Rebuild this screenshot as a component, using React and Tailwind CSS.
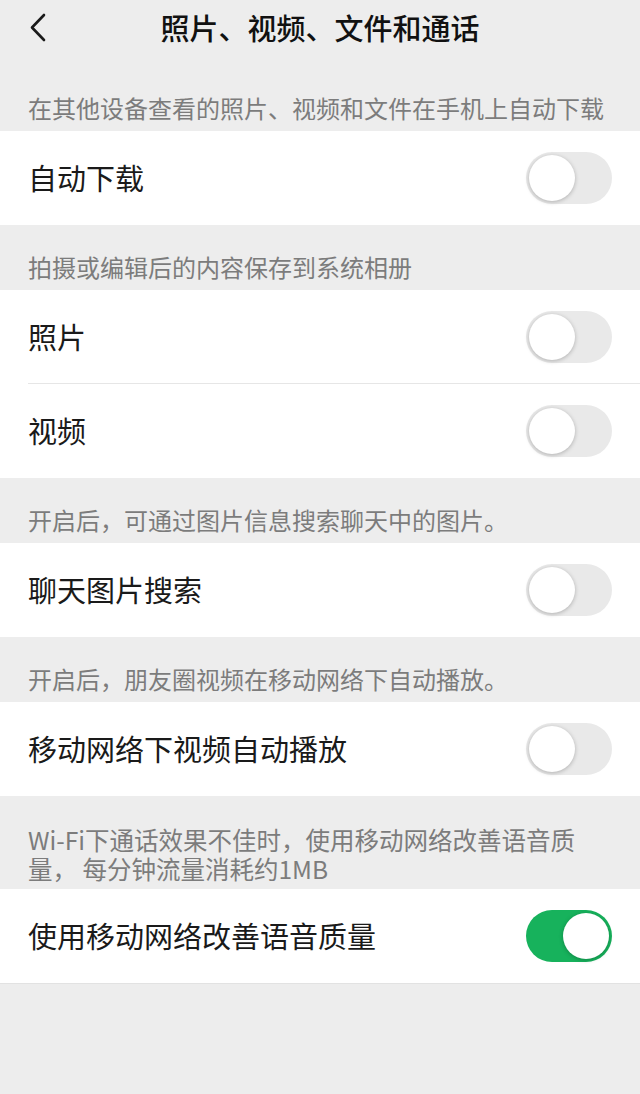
const sections = [
    { label: '在其他设备查看的照片、视频和文件在手机上自动下载', first: true, rows: [{ name: '自动下载', on: false }] },
    { label: '拍摄或编辑后的内容保存到系统相册', rows: [{ name: '照片', on: false }, { name: '视频', on: false }] },
    { label: '开启后，可通过图片信息搜索聊天中的图片。', rows: [{ name: '聊天图片搜索', on: false }] },
    { label: '开启后，朋友圈视频在移动网络下自动播放。', rows: [{ name: '移动网络下视频自动播放', on: false }] },
];

const Toggle = ({ on }) => (
    <div
        className={`w-[86px] h-[52px] rounded-full flex items-center p-[3px] ${on ? 'bg-[#17b25c] justify-end' : 'bg-[#e9e9e9] justify-start'}`}
    >
        <div className="w-[46px] h-[46px] rounded-full bg-white shadow-[0_1px_4px_rgba(0,0,0,0.25)]" />
    </div>
);

const Row = ({ name, on, divider }) => (
    <div className="bg-white">
        <div className={`h-[94px] ml-[28px] pr-[28px] flex items-center justify-between ${divider ? 'border-b border-[#e6e6e6]' : ''}`}>
            <span className="text-[29px] text-[#1a1a1a]">{name}</span>
            <Toggle on={on} />
        </div>
    </div>
);

export default function App() {
    return (
        <div className="min-h-[1094px] bg-[#ededed] font-['Noto_Sans_CJK_SC',sans-serif]">
            {/* header */}
            <div className="relative h-[56px] flex items-center justify-center">
                <svg className="absolute left-[27px] top-[12px]" width="22" height="32" viewBox="0 0 22 32" fill="none">
                    <path d="M17 3 L5 15.5 L17 28" stroke="#1a1a1a" strokeWidth="2.6" strokeLinecap="round" strokeLinejoin="round" />
                </svg>
                <h1 className="text-[29px] font-medium text-[#111] leading-none -mt-[2px]">照片、视频、文件和通话</h1>
            </div>

            {sections.map((s, i) => (
                <div key={i}>
                    <div className={`${s.first ? 'h-[75px]' : 'h-[65px]'} px-[28px] flex items-end pb-[8px]`}>
                        <p className="text-[24px] leading-[30px] text-[#7c7c7c] whitespace-nowrap">{s.label}</p>
                    </div>
                    {s.rows.map((r, j) => (
                        <Row key={r.name} name={r.name} on={r.on} divider={j < s.rows.length - 1} />
                    ))}
                </div>
            ))}

            <div className="h-[93px] px-[28px] flex flex-col justify-end pb-[6px] text-[24.5px] leading-[29px] text-[#7c7c7c]">
                <p className="whitespace-nowrap">Wi-Fi下通话效果不佳时，使用移动网络改善语音质</p>
                <p className="whitespace-nowrap">量， 每分钟流量消耗约1MB</p>
            </div>
            <div className="border-b border-[#e2e2e2]">
                <Row name="使用移动网络改善语音质量" on={true} />
            </div>
        </div>
    );
}
